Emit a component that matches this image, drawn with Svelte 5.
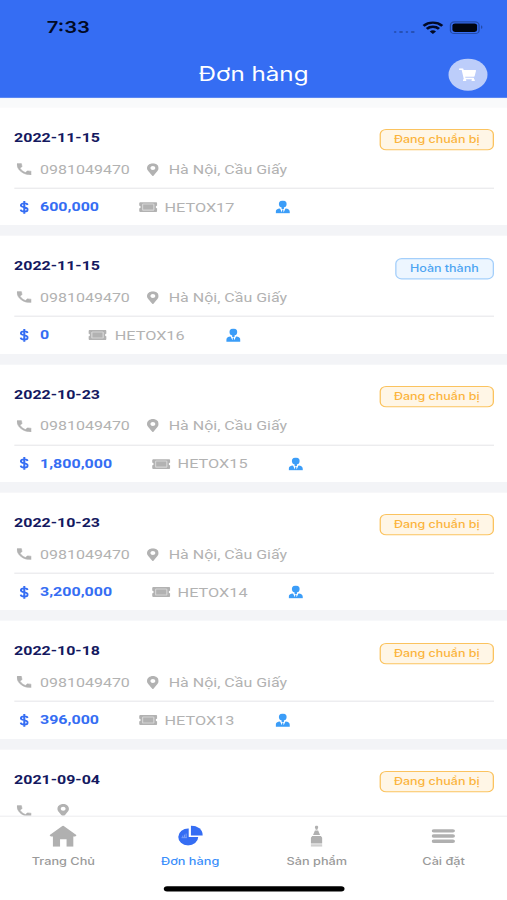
<script lang="ts">
  type Order = {
    date: string
    phone?: string
    address?: string
    total?: string
    code?: string
    done?: boolean
  }

  const phone = '0981049470'
  const address = 'Hà Nội, Cầu Giấy'

  const orders: Order[] = [
    { date: '2022-11-15', phone, address, total: '600,000', code: 'HETOX17' },
    { date: '2022-11-15', phone, address, total: '0', code: 'HETOX16', done: true },
    { date: '2022-10-23', phone, address, total: '1,800,000', code: 'HETOX15' },
    { date: '2022-10-23', phone, address, total: '3,200,000', code: 'HETOX14' },
    { date: '2022-10-18', phone, address, total: '396,000', code: 'HETOX13' },
    { date: '2021-09-04' },
  ]

  const tabs = [
    { id: 'home', label: 'Trang Chủ' },
    { id: 'orders', label: 'Đơn hàng' },
    { id: 'products', label: 'Sản phẩm' },
    { id: 'settings', label: 'Cài đặt' },
  ]
  let active = $state('orders')
</script>

<div class="viewport">
  <div class="screen">
    <header>
      <div class="status">
        <span class="time">7:33</span>
        <div class="signals">
          <span class="dots"><i></i><i></i><i></i><i></i></span>
          <svg class="wifi" viewBox="0 0 16 12">
            <path d="M.8 4.2a10.3 10.3 0 0 1 14.4 0M3.3 7a6.7 6.7 0 0 1 9.4 0" />
            <path class="solid" d="M8 12 5.6 9.6a3.4 3.4 0 0 1 4.8 0z" />
          </svg>
          <span class="battery"><b></b></span>
        </div>
      </div>
      <div class="bar">
        <h1>Đơn hàng</h1>
        <button class="cart" aria-label="Giỏ hàng">
          <svg viewBox="0 0 576 512" preserveAspectRatio="none">
            <path
              d="M528.12 301.319l47.273-208C578.806 78.301 567.391 64 551.99 64H159.208l-9.166-44.81C147.758 8.021 137.93 0 126.529 0H24C10.745 0 0 10.745 0 24v16c0 13.255 10.745 24 24 24h69.883l70.248 343.435C147.325 417.1 136 435.222 136 456c0 30.928 25.072 56 56 56s56-25.072 56-56c0-15.674-6.447-29.835-16.824-40h209.647C430.447 426.165 424 440.326 424 456c0 30.928 25.072 56 56 56s56-25.072 56-56c0-22.172-12.888-41.332-31.579-50.405l5.517-24.276c3.413-15.018-8.002-29.319-23.403-29.319H218.117l-6.545-32h293.145c11.206 0 20.92-7.754 23.403-18.681z"
            />
          </svg>
        </button>
      </div>
    </header>

    <main>
      {#each orders as o, i (i)}
        <article>
          <div class="top">
            <strong>{o.date}</strong>
            <span class="badge" class:done={o.done}>{o.done ? 'Hoàn thành' : 'Đang chuẩn bị'}</span>
          </div>
          <div class="row contact">
            <span class="icon">
              <svg class="phone" width="11.6" height="11" viewBox="3 3 18 18" preserveAspectRatio="none">
                <path
                  d="M6.62 10.79c1.44 2.83 3.76 5.14 6.59 6.59l2.2-2.2c.27-.27.67-.36 1.02-.24 1.12.37 2.33.57 3.57.57.55 0 1 .45 1 1V20c0 .55-.45 1-1 1-9.39 0-17-7.61-17-17 0-.55.45-1 1-1h3.5c.55 0 1 .45 1 1 0 1.25.2 2.45.57 3.57.11.35.03.74-.25 1.02l-2.2 2.2z"
                />
              </svg>
            </span>
            <span class="text">{o.phone ?? ''}</span>
            <span class="icon">
              <svg width="9.2" height="12" viewBox="0 0 384 512">
                <path
                  d="M172.268 501.67C26.97 291.031 0 269.413 0 192 0 85.961 85.961 0 192 0s192 85.961 192 192c0 77.413-26.97 99.031-172.268 309.67-9.535 13.774-29.93 13.773-39.464 0zM192 272c44.183 0 80-35.817 80-80s-35.817-80-80-80-80 35.817-80 80 35.817 80 80 80z"
                />
              </svg>
            </span>
            <span class="text">{o.address ?? ''}</span>
          </div>
          {#if o.total}
            <div class="row summary">
              <span class="icon dollar">
                <svg width="7.4" height="13" viewBox="0 0 8 14">
                  <path d="M4 .6v12.8M6.8 4.6C6.5 3.3 5.5 2.8 4 2.8 2.3 2.8 1.2 3.6 1.2 4.8 1.2 7.6 6.9 6.2 6.9 9.2 6.9 10.5 5.7 11.3 4 11.3 2.3 11.3 1.2 10.6 1 9.3" />
                </svg>
              </span>
              <b>{o.total}</b>
              <span class="icon">
                <svg width="14" height="12.4" viewBox="0 0 576 512">
                  <path
                    d="M128 160h320v192H128V160zm400 96c0 26.51 21.49 48 48 48v96c0 26.51-21.49 48-48 48H48c-26.51 0-48-21.49-48-48v-96c26.51 0 48-21.49 48-48s-21.49-48-48-48v-96c0-26.51 21.49-48 48-48h480c26.51 0 48 21.49 48 48v96c-26.51 0-48 21.49-48 48zm-48-104c0-13.255-10.745-24-24-24H120c-13.255 0-24 10.745-24 24v208c0 13.255 10.745 24 24 24h336c13.255 0 24-10.745 24-24V152z"
                  />
                  <path opacity=".55" d="M96 128h384v256H96z" />
                </svg>
              </span>
              <span class="text">{o.code}</span>
              <span class="icon person">
                <svg width="11" height="12.4" viewBox="0 0 22 25">
                  <ellipse cx="11" cy="6.8" rx="6" ry="6.8" />
                  <path d="M9.2 12h3.6v4H9.2zM0 25v-3.5C0 17.5 2.5 15.5 6.8 15.2L9.6 22.5 10.3 17h1.400L12.400 22.500 15.200 15.200c4.300.3 6.800 2.300 6.800 6.300V25z" />
                </svg>
              </span>
            </div>
          {/if}
        </article>
      {/each}
    </main>

    <nav>
      {#each tabs as t (t.id)}
        <button class="tab" class:active={active === t.id} onclick={() => (active = t.id)}>
          <span class="glyph">
            {#if t.id === 'home'}
              <svg width="21" height="20" viewBox="0 0 21 20">
                <path d="M10.5 0 21 9.2 19.8 10.4H18.4V20H13.2V13H8.2V20H2.7V10.4H1.2L0 9.2z" />
              </svg>
            {:else if t.id === 'orders'}
              <svg width="19" height="19.2" viewBox="0 0 20 20" preserveAspectRatio="none">
                <path d="M8.6 3v8.4h7.7A8.1 8.3 0 1 1 8.6 3z" />
                <path d="M10.4 0a9.5 9.8 0 0 1 9.6 10h-9.6z" />
                <path class="mark" d="M2.8 12h4.4M3.8 11.5V10M5.2 11.5V9M6.5 11.5V8" />
              </svg>
            {:else if t.id === 'products'}
              <svg width="9" height="20.5" viewBox="0 0 10 21" preserveAspectRatio="none">
                <path d="M4.3 0h1.4l.8 1.5L5.7 4.3H4.3L3.5 1.5zM3.6 5h2.8L8 9.2H2zM1.3 10.3h7.4L10 12v5.3H0V12z" />
                <path opacity=".6" d="M0 18h10v2.5H0z" />
              </svg>
            {:else}
              <svg width="18" height="14" viewBox="0 0 18 14">
                <path class="line" d="M1.6 2.1h14.8M1.6 7h14.8M1.6 11.9h14.8" />
              </svg>
            {/if}
          </span>
          <span class="label">{t.label}</span>
        </button>
      {/each}
      <span class="indicator"></span>
    </nav>
  </div>
</div>

<style>
  :global(body) {
    background: #fff;
  }
  .viewport {
    width: 507px;
    height: 900px;
    overflow: hidden;
  }
  /* 390x844 device screen stretched over the viewport */
  .screen {
    width: 390px;
    height: 844px;
    display: flex;
    flex-direction: column;
    transform: scale(1.3, 1.0664);
    transform-origin: 0 0;
    font-family: Roboto, sans-serif;
    background: #f3f4f7;
    overflow: hidden;
  }
  svg {
    display: block;
    fill: currentColor;
  }
  button {
    border: 0;
    padding: 0;
    font: inherit;
  }

  header {
    flex: none;
    height: 92px;
    box-sizing: border-box;
    background: #356df3;
    border-bottom: 1px solid #5c89f3;
  }
  .status {
    height: 47px;
    box-sizing: border-box;
    padding: 4px 18.5px 0 36px;
    display: flex;
    align-items: center;
    justify-content: space-between;
    color: #020a25;
  }
  .time {
    font: 600 15.5px Inter, sans-serif;
  }
  .signals {
    display: flex;
    align-items: center;
  }
  .dots {
    display: flex;
    gap: 2.1px;
    margin: 9px 6px 0 0;
  }
  .dots i {
    width: 2.4px;
    height: 2.6px;
    border-radius: 50%;
    background: #2751b5;
  }
  .wifi {
    width: 16px;
    height: 12px;
    margin-right: 5.5px;
    fill: none;
    stroke: currentColor;
    stroke-width: 2.2;
    overflow: visible;
  }
  .wifi .solid {
    fill: currentColor;
    stroke: none;
  }
  .battery {
    position: relative;
    width: 23px;
    height: 12px;
    margin-right: 2.5px;
    padding: 1px;
    box-sizing: border-box;
    border: 1px solid #234ba8;
    border-radius: 3.5px;
  }
  .battery b {
    display: block;
    height: 100%;
    border-radius: 2px;
    background: #000510;
  }
  .battery::after {
    content: '';
    position: absolute;
    right: -3px;
    top: 3.3px;
    width: 1.3px;
    height: 3.5px;
    border-radius: 0 2px 2px 0;
    background: #234ba8;
  }
  .bar {
    height: 45px;
    padding: 0 15px;
    display: grid;
    grid-template-columns: 30px 1fr 30px;
    align-items: center;
  }
  h1 {
    grid-column: 2;
    margin: 0 0 1px;
    text-align: center;
    font: 400 18.6px Inter, sans-serif;
    color: #fff;
  }
  .cart {
    width: 30px;
    height: 30px;
    border-radius: 50%;
    display: grid;
    place-items: center;
    background: #bccdfa;
    color: #fff;
  }
  .cart svg {
    width: 13.2px;
    height: 12.8px;
    margin-top: 1px;
  }

  main {
    flex: 1;
    min-height: 0;
    overflow: hidden;
    padding-top: 9.2px;
    background: linear-gradient(#f9fafb 9.2px, #f3f4f7 9.2px);
  }
  article {
    height: 110.3px;
    margin-bottom: 10px;
    padding: 17px 10.5px 0 10.8px;
    box-sizing: border-box;
    background: #fff;
  }
  .top {
    height: 27px;
    display: flex;
    justify-content: space-between;
    align-items: flex-start;
  }
  .top strong {
    font-size: 12.3px;
    line-height: 22px;
    color: #14195f;
  }
  .badge {
    height: 20px;
    margin-top: 3.2px;
    padding: 0 9.6px;
    box-sizing: border-box;
    border: 1px solid #fbc35f;
    border-radius: 5px;
    background: #fff6e6;
    color: #fbb43c;
    font: 500 9.6px/18.4px Inter, sans-serif;
  }
  .badge.done {
    padding: 0 10.3px;
    border-color: #a4cffb;
    background: #edf6ff;
    color: #4da5f2;
  }
  .row {
    display: flex;
    align-items: center;
    font-size: 12.3px;
    color: #b2b2b2;
  }
  .contact {
    height: 30.8px;
    border-bottom: 1px solid #e6e6e9;
  }
  .contact > * {
    margin-bottom: 3.8px;
  }
  .phone {
    stroke: currentColor;
    stroke-width: 0.8;
  }
  .summary {
    height: 34.4px;
  }
  .summary .text {
    font-size: 12.5px;
  }
  .icon {
    flex: none;
    width: 15.6px;
    margin-right: 4.4px;
    display: grid;
    place-items: center;
  }
  .contact .text + .icon {
    margin-left: 9.9px;
  }
  .summary .icon:not(:first-child) {
    margin-left: 29.6px;
    margin-right: 5.2px;
  }
  .dollar {
    color: #356df3;
  }
  .dollar svg {
    margin-left: -0.7px;
    fill: none;
    stroke: currentColor;
    stroke-width: 1.7;
  }
  .summary b {
    color: #356df3;
  }
  .person {
    color: #3b9df8;
  }

  nav {
    flex: none;
    position: relative;
    height: 79.3px;
    box-sizing: border-box;
    display: flex;
    background: #fff;
    border-top: 1px solid #f0f0f2;
  }
  .tab {
    flex: 1;
    display: flex;
    flex-direction: column;
    align-items: center;
    background: none;
    color: #b0b0b0;
  }
  .glyph {
    height: 36.4px;
    display: grid;
    place-items: center;
  }
  .label {
    font: 500 9.8px/12px Inter, sans-serif;
    color: #9a9a9a;
  }
  .active {
    color: #356df3;
  }
  .active .label {
    color: #3c8ffb;
  }
  .mark {
    fill: none;
    stroke: #91aff8;
    stroke-width: 0.7;
  }
  .line {
    stroke: currentColor;
    stroke-width: 3.2;
    stroke-linecap: round;
  }
  .indicator {
    position: absolute;
    left: 126px;
    bottom: 8.3px;
    width: 139px;
    height: 5px;
    border-radius: 3px;
    background: #000;
  }
</style>
